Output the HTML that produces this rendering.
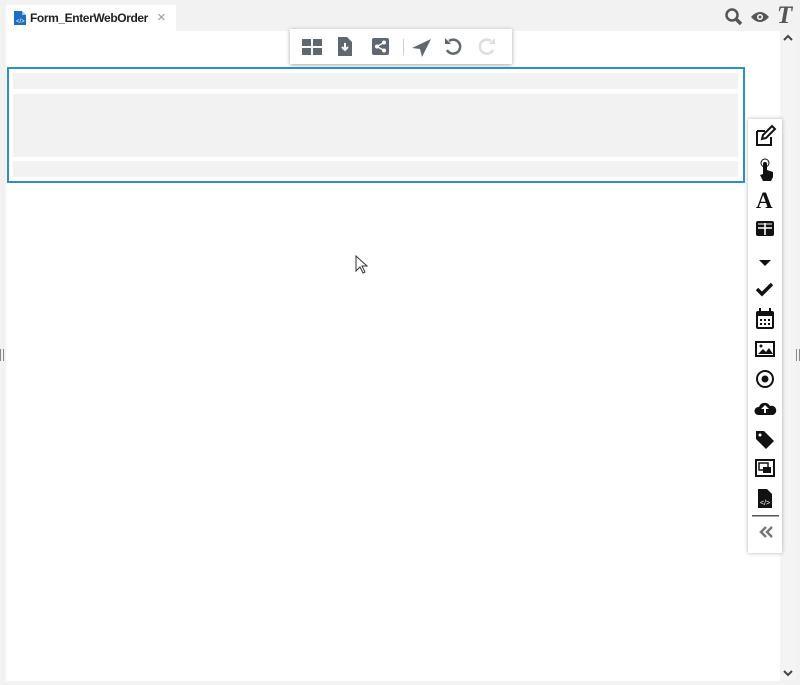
<!DOCTYPE html><html><head><style>
body{margin:0;width:800px;height:685px;background:#f2f2f2;position:relative;overflow:hidden;font-family:"Liberation Sans",sans-serif}
.a{position:absolute}
</style></head><body>
<div class="a" style="left:6px;top:5px;width:170px;height:27px;background:#fff"></div>
<svg class="a" style="left:14px;top:11px" width="12" height="14"><path d="M0 0h8l4 4v10H0z" fill="#1e6fc4"/><path d="M8 0v4h4" fill="#9cc3ee"/><text x="2" y="12" font-size="6" fill="#fff">&lt;/&gt;</text></svg>
<div class="a" style="left:30px;top:11px;font-size:12px;font-weight:bold;color:#222;letter-spacing:-0.4px">Form_EnterWebOrder</div>
<div class="a" style="left:157px;top:9px;font-size:15px;color:#999">×</div>
<div class="a" style="left:6px;top:31px;width:774px;height:650px;background:#fff"></div>
<div class="a" style="left:780px;top:31px;width:16px;height:650px;background:#f4f4f4"></div>
<svg class="a" style="left:782px;top:33px" width="12" height="10"><path d="M2 7l4-4 4 4" fill="none" stroke="#444" stroke-width="2"/></svg>
<svg class="a" style="left:782px;top:668px" width="12" height="10"><path d="M2 3l4 4 4-4" fill="none" stroke="#444" stroke-width="2"/></svg>
<svg class="a" style="left:724px;top:7px" width="20" height="20"><circle cx="8" cy="8" r="5.5" fill="none" stroke="#555" stroke-width="2.5"/><path d="M12 12l5 5" stroke="#555" stroke-width="3.5"/></svg>
<svg class="a" style="left:750px;top:10px" width="20" height="14"><path d="M1 7Q10-3 19 7Q10 17 1 7z" fill="#555"/><circle cx="10" cy="7" r="3" fill="#fff"/><circle cx="10" cy="7" r="1.5" fill="#555"/></svg>
<div class="a" style="left:777px;top:2px;font-family:'Liberation Serif',serif;font-style:italic;font-weight:bold;font-size:25px;color:#555">T</div>
<div class="a" style="left:0;top:349px;width:4px;height:12px;border-left:1px solid #888;border-right:1px solid #888;box-sizing:border-box"></div>
<div class="a" style="left:796px;top:349px;width:4px;height:12px;border-left:1px solid #888;border-right:1px solid #888;box-sizing:border-box"></div>
<div class="a" style="left:290px;top:29px;width:222px;height:35px;background:#fff;box-shadow:0 1px 4px rgba(0,0,0,.35)"></div>
<svg class="a" style="left:290px;top:29px" width="222" height="35">
<g fill="#5f6770"><rect x="12" y="10" width="9" height="7"/><rect x="23" y="10" width="9" height="7"/><rect x="12" y="19" width="9" height="7"/><rect x="23" y="19" width="9" height="7"/>
<path d="M48 8h9l5 5v14H48z"/><rect x="82" y="9" width="17" height="17" rx="2"/>
<path d="M122 19l19-9-9 18-2-8z"/></g>
<path d="M55 14v7m-3-3l3 3 3-3" stroke="#fff" stroke-width="2" fill="none"/>
<g fill="#fff"><circle cx="87" cy="17.5" r="2"/><circle cx="94" cy="13.5" r="2"/><circle cx="94" cy="21.5" r="2"/></g><path d="M87 17.5l7-4m-7 4l7 4" stroke="#fff" stroke-width="1.3"/>
<rect x="113" y="10" width="1" height="16" fill="#ccc"/>
<path d="M159 12a7 7 0 1 1-2 9" fill="none" stroke="#5f6770" stroke-width="2.5"/><path d="M155 9v6h6z" fill="#5f6770"/>
<path d="M201 12a7 7 0 1 0 2 9" fill="none" stroke="#ddd" stroke-width="2.5"/><path d="M205 9v6h-6z" fill="#ddd"/>
</svg>
<div class="a" style="left:7px;top:67px;width:734px;height:112px;border:2px solid #2b8fca"></div>
<div class="a" style="left:13px;top:73px;width:725px;height:16px;background:#f2f2f2"></div>
<div class="a" style="left:13px;top:94px;width:725px;height:63px;background:#f2f2f2"></div>
<div class="a" style="left:13px;top:161px;width:725px;height:16px;background:#f2f2f2"></div>
<svg class="a" style="left:355px;top:255px" width="14" height="20"><path d="M1 1v15l4-4 3 6 2-1-3-6h5z" fill="#fff" stroke="#333"/></svg>
<div class="a" style="left:748px;top:119px;width:34px;height:434px;background:#fff;box-shadow:0 0 4px rgba(0,0,0,.3)"></div>
<svg class="a" style="left:748px;top:119px" width="34" height="434" fill="#111">
<path d="M9 12h8M9 12v14h14v-8" fill="none" stroke="#111" stroke-width="2"/><path d="M14 20l1-4 9-9 3 3-9 9z" fill="none" stroke="#111" stroke-width="2"/>
<path d="M15 45a2 2 0 0 1 4 0v6l6 2v5l-2 4h-8l-3-6 3-1z"/><circle cx="17" cy="44" r="4" fill="none" stroke="#111" stroke-width="1"/>
<text x="8" y="89" font-family="Liberation Serif" font-weight="bold" font-size="23">A</text>
<rect x="8" y="102" width="18" height="15" rx="2"/><path d="M10 109h14M17 104v12" stroke="#fff" stroke-width="1.6"/><path d="M10 105h14" stroke="#fff" stroke-width="1"/>
<path d="M11 141h12l-6 6z"/>
<path d="M9 170l5 5 10-10" fill="none" stroke="#111" stroke-width="3.5"/>
<rect x="9" y="193" width="16" height="16" rx="1" fill="none" stroke="#111" stroke-width="2"/><rect x="9" y="193" width="16" height="4"/><rect x="11" y="189" width="2" height="5"/><rect x="21" y="189" width="2" height="5"/><g><rect x="12" y="200" width="2" height="2"/><rect x="16" y="200" width="2" height="2"/><rect x="20" y="200" width="2" height="2"/><rect x="12" y="204" width="2" height="2"/><rect x="16" y="204" width="2" height="2"/><rect x="20" y="204" width="2" height="2"/></g>
<rect x="8" y="223" width="18" height="14" fill="none" stroke="#111" stroke-width="2"/><path d="M10 235l5-5 3 3 3-4 4 6z"/><circle cx="13" cy="227" r="1.5"/>
<circle cx="17" cy="260" r="8" fill="none" stroke="#111" stroke-width="2"/><circle cx="17" cy="260" r="3.5"/>
<path d="M10 296a4 4 0 0 1 1-8 6 6 0 0 1 11-1 4.5 4.5 0 0 1 3 9z"/><path d="M17 286l-4 4h3v4h2v-4h3z" fill="#fff"/>
<path d="M8 312h8l10 10-8 8-10-10z"/><circle cx="12" cy="316" r="1.5" fill="#fff"/>
<rect x="8" y="341" width="18" height="16" fill="none" stroke="#111" stroke-width="2"/><rect x="11" y="344" width="9" height="7" fill="none" stroke="#111" stroke-width="1.5"/><rect x="15" y="348" width="8" height="6"/>
<path d="M10 370h9l5 5v14H10z"/><text x="12" y="386" fill="#fff" font-size="7">&lt;/&gt;</text>
<rect x="4" y="396" width="27" height="1.5" fill="#555"/>
<path d="M18 408l-5 5 5 5M24 408l-5 5 5 5" fill="none" stroke="#777" stroke-width="2.5"/>
</svg>
</body></html>
